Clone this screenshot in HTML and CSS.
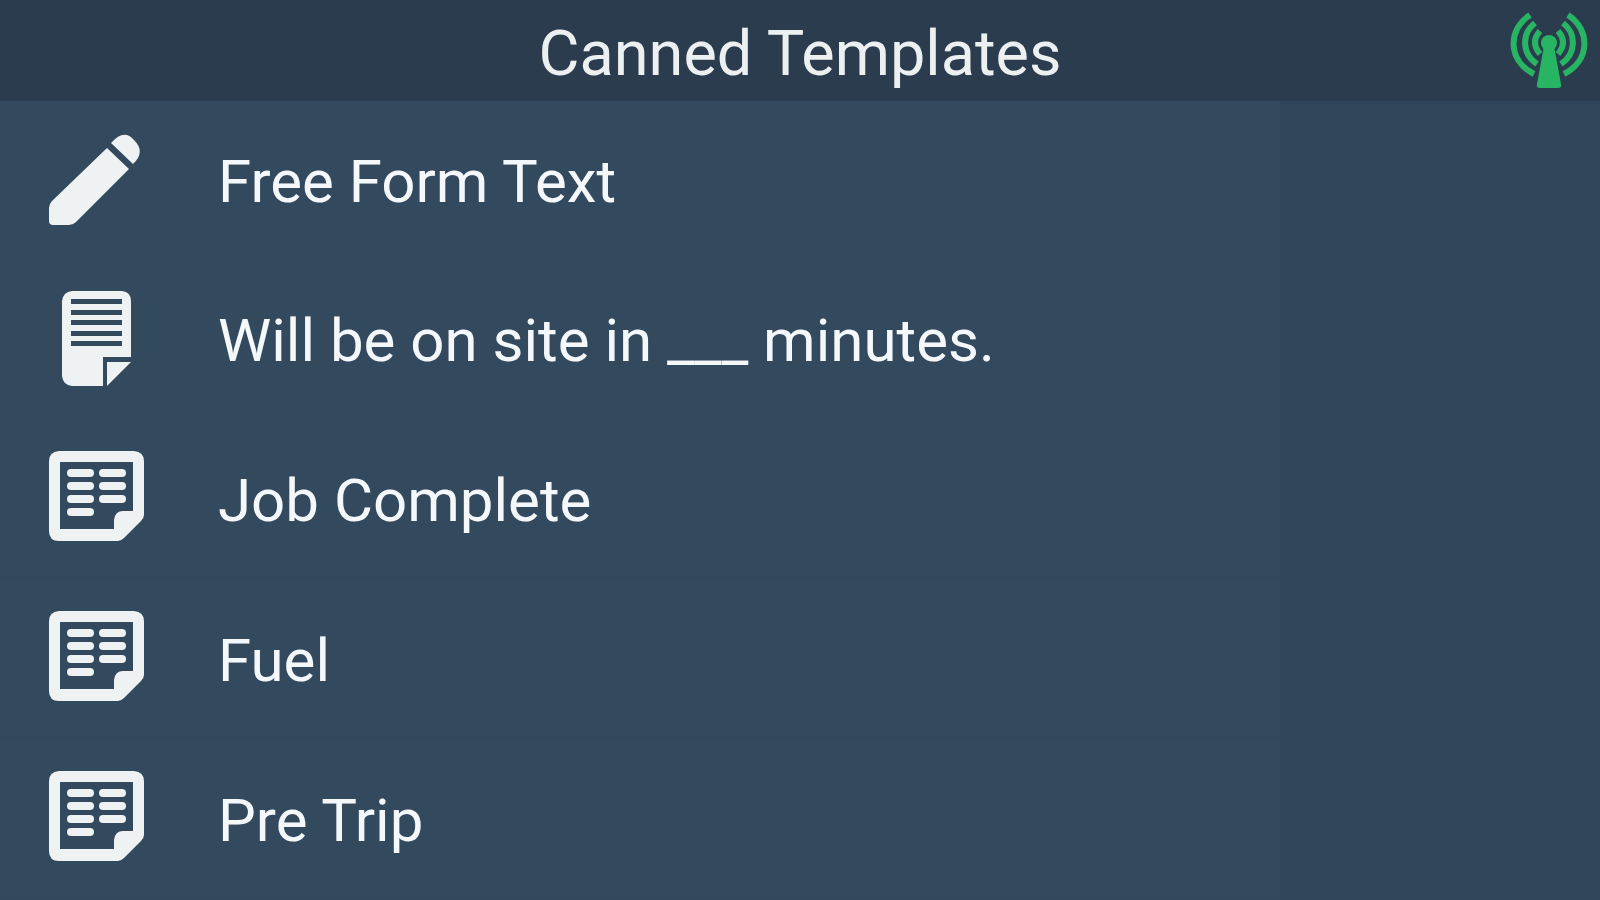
FILE: index.html
```html
<!DOCTYPE html>
<html lang="en">
<head>
<meta charset="utf-8">
<meta name="viewport" content="width=device-width, initial-scale=1">
<title>Canned Templates</title>
<link rel="stylesheet" href="styles.css">
</head>
<body>
<svg class="sprite" aria-hidden="true">
  <symbol id="form" viewBox="0 0 96 96">
    <path fill-rule="evenodd" d="M11 1H86Q96 2 96 11V65Q96 68 93 71L76 88Q73 91 70 91H11Q1 91 1 81V11Q1 2 11 1ZM12 12V79H66V70Q67 61 75 61H85V12Z"/>
    <rect x="19" y="19" width="27" height="8" rx="4"/><rect x="51" y="19" width="27" height="8" rx="4"/>
    <rect x="19" y="32" width="27" height="8" rx="4"/><rect x="51" y="32" width="27" height="8" rx="4"/>
    <rect x="19" y="45" width="27" height="8" rx="4"/><rect x="51" y="45" width="27" height="8" rx="4"/>
    <rect x="19" y="58" width="27" height="8" rx="4"/>
  </symbol>
</svg>
<header class="header">
  <h1 class="title">Canned Templates</h1>
  <svg class="signal" viewBox="0 0 78 78" role="img" aria-label="Connected">
    <circle cx="39" cy="31" r="8"/>
    <path d="M34 34H44L51 72Q52 76 48 76H30Q26 76 27 72Z"/>
    <path class="wave" d="M30 19Q20 30 30 42M48 19Q58 30 48 42M25 11C11 22 12 42 27 52M53 11C67 22 66 42 51 52M20 3C-3 18 -2 49 24 62M58 3C81 18 80 49 54 62"/>
  </svg>
</header>
<main class="content">
  <ul class="list">
    <li><button class="row" type="button">
      <span class="icon"><svg width="96" height="96" viewBox="0 -4 96 96"><path d="M59 13L81 34L28 87Q25 90 21 90H5Q1 90 1 86V73Q1 69 4 66ZM63 8Q76 -7 86 5Q98 17 85 29Z"/></svg></span>
      <span class="label">Free Form Text</span></button></li>
    <li><button class="row" type="button">
      <span class="icon"><svg width="72" height="98" viewBox="-2 -2 72 98"><path fill-rule="evenodd" d="M10 0H60Q69 1 69 10V66H41V95H10Q1 94 0 85V10Q1 1 10 0ZM9 8V13H60V8ZM9 19V24H60V19ZM9 29V34H60V29ZM9 40V45H60V40ZM9 50V55H60V50ZM45 71H69L45 95Z"/></svg></span>
      <span class="label">Will be on site in ___ minutes.</span></button></li>
    <li><button class="row" type="button">
      <span class="icon"><svg width="96" height="96"><use href="#form"/></svg></span>
      <span class="label">Job Complete</span></button></li>
    <li><button class="row" type="button">
      <span class="icon"><svg width="96" height="96"><use href="#form"/></svg></span>
      <span class="label">Fuel</span></button></li>
    <li><button class="row" type="button">
      <span class="icon"><svg width="96" height="96"><use href="#form"/></svg></span>
      <span class="label">Pre Trip</span></button></li>
  </ul>
</main>
</body>
</html>
```
FILE: styles.css
```css
* { box-sizing: border-box; }
body {
  margin: 0;
  min-height: 100vh;
  display: flex;
  flex-direction: column;
  background: #31455a;
  color: #f4f8fb;
  font-family: Roboto, sans-serif;
}
.sprite { display: none; }
.header {
  display: grid;
  grid-template-columns: 1fr auto 1fr;
  align-items: center;
  height: 101px;
  padding: 0 12px;
  background: #2c3c4f;
}
.title {
  grid-column: 2;
  margin: 0;
  padding-top: 6px;
  color: #ecf0f1;
  font-size: 63px;
  font-weight: 400;
  line-height: 80px;
}
.signal {
  justify-self: end;
  width: 78px;
  height: 78px;
  overflow: visible;
  fill: #27b563;
}
.wave {
  fill: none;
  stroke: #27b563;
  stroke-width: 6;
}
.content {
  flex: 1;
  display: grid;
  grid-template-columns: 4fr 1fr;
}
.list {
  margin: 0;
  padding: 0;
  list-style: none;
  background: #33495e;
}
.row {
  display: flex;
  align-items: center;
  width: 100%;
  height: 160px;
  padding: 0 48px;
  border: 0;
  border-bottom: 1px solid #31465a;
  background: none;
  color: inherit;
  font: inherit;
  font-size: 60px;
  line-height: 72px;
  text-align: left;
  gap: 74px;
}
.list li:first-child .row { height: 157px; }
.list li:nth-child(-n+2) .row { border-bottom-color: transparent; }
.icon {
  display: flex;
  justify-content: center;
  width: 96px;
  fill: #eef2f3;
}
.label { padding-top: 6px; }
```
